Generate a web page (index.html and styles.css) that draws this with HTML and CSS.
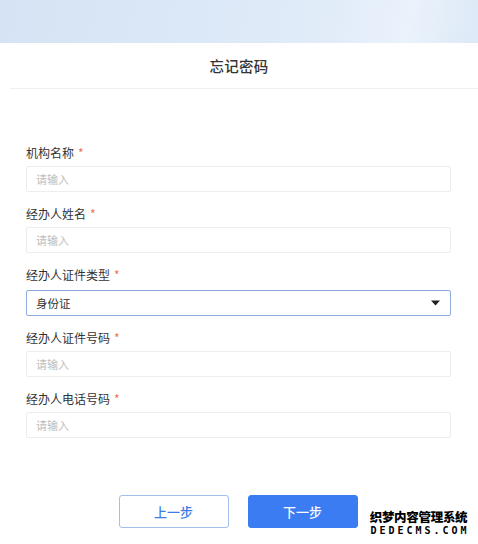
FILE: index.html
```html
<!DOCTYPE html>
<html lang="zh-CN">
<head>
<meta charset="utf-8">
<title>忘记密码</title>
<link rel="stylesheet" href="styles.css">
</head>
<body>
<div class="page">
  <div class="banner"></div>
  <div class="card">
    <div class="card-head">
      <h1 class="title">忘记密码</h1>
    </div>
    <div class="divider"></div>
    <form class="form">
      <div class="field">
        <label class="label">机构名称<span class="req">*</span></label>
        <div class="input placeholder">请输入</div>
      </div>
      <div class="field">
        <label class="label">经办人姓名<span class="req">*</span></label>
        <div class="input placeholder">请输入</div>
      </div>
      <div class="field">
        <label class="label">经办人证件类型<span class="req">*</span></label>
        <div class="input select">
          <span class="value">身份证</span>
          <svg class="caret" width="9" height="6" viewBox="0 0 9 6"><path d="M0 0.5H9L4.5 5.5Z" fill="#222"/></svg>
        </div>
      </div>
      <div class="field">
        <label class="label">经办人证件号码<span class="req">*</span></label>
        <div class="input placeholder">请输入</div>
      </div>
      <div class="field">
        <label class="label">经办人电话号码<span class="req">*</span></label>
        <div class="input placeholder">请输入</div>
      </div>
    </form>
    <div class="actions">
      <button class="btn btn-outline" type="button">上一步</button>
      <button class="btn btn-primary" type="button">下一步</button>
    </div>
  </div>
  <div class="watermark">
    <div class="wm-cn">织梦内容管理系统</div>
    <div class="wm-en">DEDECMS.COM</div>
  </div>
</div>
</body>
</html>
```
FILE: styles.css
```css
* { box-sizing: border-box; }
html, body { margin: 0; padding: 0; }
body {
  background: #fff;
  font-family: "Noto Sans CJK SC", "Noto Sans", sans-serif;
  color: #333;
}
.page {
  position: relative;
  width: 478px;
  height: 544px;
  overflow: hidden;
}
.banner {
  height: 43px;
  background: linear-gradient(100deg, #d5e3f4 0%, #dbe8f7 40%, #e2ecf9 70%, #eaf2fb 85%, #dde9f7 100%);
}
.card {
  background: #fff;
}
.card-head {
  height: 45px;
  display: flex;
  align-items: center;
  justify-content: center;
}
.title {
  margin: 0;
  font-size: 14.5px;
  font-weight: 500;
  color: #333;
  letter-spacing: 0.3px;
}
.divider {
  height: 1px;
  margin-left: 10px;
  background: #f0f0f0;
}
.form {
  padding: 56px 27px 0 26px;
  display: flex;
  flex-direction: column;
  gap: 14px;
}
.field {
  display: flex;
  flex-direction: column;
  gap: 5px;
}
.label {
  font-size: 12px;
  line-height: 16px;
  height: 16px;
  color: #333;
}
.req {
  color: #f2704e;
  margin-left: 4px;
}
.input {
  height: 26px;
  border: 1px solid #ededed;
  border-radius: 2px;
  padding: 0 9px;
  display: flex;
  align-items: center;
  font-size: 11px;
}
.placeholder { color: #bdbdbd; }
.select {
  border-color: #8eabdf;
  justify-content: space-between;
  padding-right: 10px;
  margin-top: 2px;
}
.select .value { color: #333; font-size: 11.5px; }
.caret { display: block; }
.actions {
  margin-top: 57px;
  display: flex;
  justify-content: center;
  gap: 19px;
  padding-right: 2px;
}
.btn {
  width: 110px;
  height: 33px;
  border-radius: 3px;
  font-family: inherit;
  font-size: 13px;
  font-weight: 500;
  cursor: pointer;
}
.btn-outline {
  background: #fff;
  border: 1px solid #a3bdec;
  color: #3d7be6;
}
.btn-primary {
  background: #3b7cf2;
  border: 1px solid #3b7cf2;
  color: #fff;
}
.watermark {
  position: absolute;
  right: 9px;
  bottom: 8px;
  width: 101px;
  text-align: center;
  line-height: 1;
}
.wm-cn {
  font-size: 12.5px;
  font-weight: 900;
  color: #000;
  letter-spacing: -0.3px;
  text-shadow: 1px 0 #fff, -1px 0 #fff, 0 1px #fff, 0 -1px #fff;
}
.wm-en {
  margin-top: 3px;
  margin-right: -3px;
  font-family: "DejaVu Sans Mono", monospace;
  font-size: 10px;
  font-weight: bold;
  color: #000;
  letter-spacing: 3px;
  text-shadow: 1px 0 #fff, -1px 0 #fff, 0 1px #fff, 0 -1px #fff;
}
```
